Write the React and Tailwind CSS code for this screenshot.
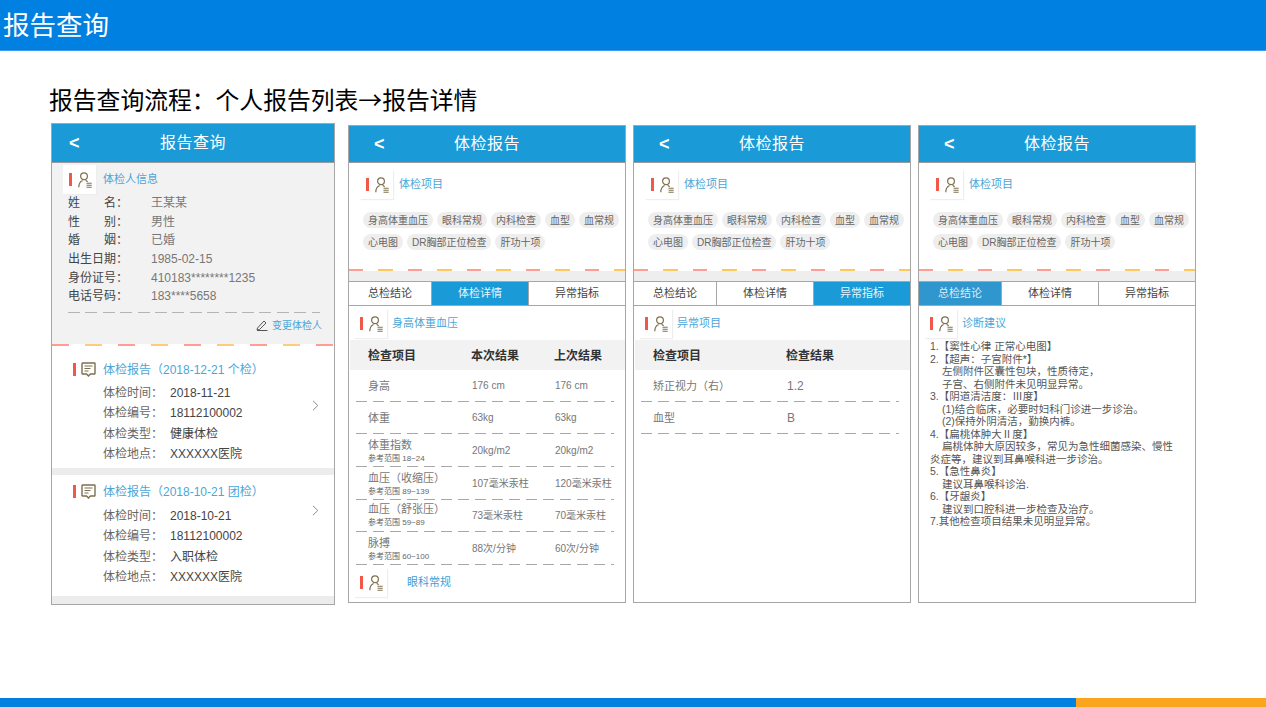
import React from 'react'

const FONT = { fontFamily: '"Liberation Sans", "Noto Sans CJK SC", sans-serif' }

const PERSON_ROWS = [
  ['姓', '名：', '王某某'],
  ['性', '别：', '男性'],
  ['婚', '姻：', '已婚'],
  ['出生日期：', '', '1985-02-15'],
  ['身份证号：', '', '410183********1235'],
  ['电话号码：', '', '183****5658'],
]

const REPORTS = [
  { title: '体检报告（2018-12-21 个检）', rows: [['体检时间：', '2018-11-21'], ['体检编号：', '18112100002'], ['体检类型：', '健康体检'], ['体检地点：', 'XXXXXX医院']] },
  { title: '体检报告（2018-10-21 团检）', rows: [['体检时间：', '2018-10-21'], ['体检编号：', '18112100002'], ['体检类型：', '入职体检'], ['体检地点：', 'XXXXXX医院']] },
]

const CHIPS = [
  ['身高体重血压', '眼科常规', '内科检查', '血型', '血常规'],
  ['心电图', 'DR胸部正位检查', '肝功十项'],
]

const DETAIL_ROWS = [
  { name: '身高', now: '176 cm', last: '176 cm', h: 'h-[31px]', pad: '' },
  { name: '体重', now: '63kg', last: '63kg', h: 'h-[31px]', pad: '' },
  { name: '体重指数', range: '参考范围 18~24', now: '20kg/m2', last: '20kg/m2', h: 'h-[32px]', pad: 'pt-[3px]' },
  { name: '血压（收缩压）', range: '参考范围 89~139', now: '107毫米汞柱', last: '120毫米汞柱', h: 'h-[32px]', pad: 'pt-[3px]' },
  { name: '血压（舒张压）', range: '参考范围 59~89', now: '73毫米汞柱', last: '70毫米汞柱', h: 'h-[31px]', pad: '' },
  { name: '脉搏', range: '参考范围 60~100', now: '88次/分钟', last: '60次/分钟', h: 'h-[32px]', pad: 'pt-[2px]' },
]

const ADVICE = [
  ['1.【窦性心律 正常心电图】', 0],
  ['2.【超声：子宫附件*】', 0],
  ['左侧附件区囊性包块，性质待定，', 1],
  ['子宫、右侧附件未见明显异常。', 1],
  ['3.【阴道清洁度：Ⅲ度】', 0],
  ['(1)结合临床，必要时妇科门诊进一步诊治。', 1],
  ['(2)保持外阴清洁，勤换内裤。', 1],
  ['4.【扁桃体肿大Ⅱ度】', 0],
  ['扁桃体肿大原因较多，常见为急性细菌感染、慢性', 1],
  ['炎症等，建议到耳鼻喉科进一步诊治。', 0],
  ['5.【急性鼻炎】', 0],
  ['建议耳鼻喉科诊治.', 1],
  ['6.【牙龈炎】', 0],
  ['建议到口腔科进一步检查及治疗。', 1],
  ['7.其他检查项目结果未见明显异常。', 0],
]

function PersonIcon() {
  return (
    <svg width="14" height="16" viewBox="0 0 14 16" fill="none" stroke="#80714f" strokeWidth="1.2">
      <circle cx="6" cy="4.200" r="3.400" />
      <path d="M.8 15.200c0-3.600 1.700-5.800 3.800-6.700M7.600 8.400c.8.300 1.500.8 2 1.400" />
      <path d="M8.500 11.200h5.200M8.500 13.200h5.200M8.500 15.200h5.200" strokeWidth="1.100" />
    </svg>
  )
}

function ReportIcon() {
  return (
    <svg width="15" height="15" viewBox="0 0 15 15" fill="none" stroke="#7d6e50" strokeWidth="1.400">
      <path d="M1.500 1h12a.5.5 0 0 1 .5.5v10a.5.5 0 0 1-.5.5H9.500l-2 2-2-2h-4a.5.5 0 0 1-.5-.5v-10a.5.5 0 0 1 .5-.5z" />
      <path d="M3.500 4h8M3.500 6.500h6M3.500 9h4" strokeWidth="1" />
    </svg>
  )
}

function IconTile({ className = '' }) {
  return (
    <div className={`flex h-[29px] w-[33px] shrink-0 items-center gap-[6px] bg-white pl-[6px] shadow-[1px_1px_1px_#eeeeee] ${className}`}>
      <span className="h-[13px] w-[3px] bg-[#f2584a]" />
      <PersonIcon />
    </div>
  )
}

function PhoneHeader({ title, tall }) {
  return (
    <div className={`flex shrink-0 items-center border-b border-[#9a9a9a] bg-[#1a9ad6] text-white ${tall ? 'h-[39px] pl-[17px]' : 'h-[37px] pl-[25px]'}`}>
      <span className="w-[13px] text-[18px] leading-none font-bold">&lt;</span>
      <span className={`flex-1 text-center text-[16px] tracking-[0.5px] ${tall ? 'pr-[30px]' : 'pr-[38px]'}`}>{title}</span>
    </div>
  )
}

function ColorDash({ wide }) {
  return (
    <div
      className={`h-[2px] shrink-0 ${
        wide
          ? 'bg-[repeating-linear-gradient(90deg,#ff9c94_0,#ff9c94_17px,transparent_17px,transparent_33px,#ffcb7c_33px,#ffcb7c_50px,transparent_50px,transparent_66px)]'
          : 'bg-[repeating-linear-gradient(90deg,#ff9c94_0,#ff9c94_14px,transparent_14px,transparent_29px,#ffc85c_29px,#ffc85c_44px,transparent_44px,transparent_59px)]'
      }`}
    />
  )
}

function ItemDash() {
  return <div className="ml-[7px] h-[1px] w-[258px] shrink-0 bg-[repeating-linear-gradient(90deg,#a8a8a8_0,#a8a8a8_11px,transparent_11px,transparent_17px)]" />
}

function Chevron() {
  return (
    <svg width="7" height="11" viewBox="0 0 7 11" fill="none" stroke="#8a8a8a" strokeWidth="1">
      <path d="M1 .8 5.800 5.500 1 10.200" />
    </svg>
  )
}

function ReportCard({ report, className, rowsClass, chevronClass }) {
  return (
    <div className={`relative flex flex-col bg-white pl-[21px] ${className}`}>
      <div className="flex h-[17px] items-center">
        <span className="h-[13px] w-[3px] bg-[#f2584a]" />
        <span className="ml-[5px]"><ReportIcon /></span>
        <span className="ml-[7px] text-[12px] text-[#4ba6d8]">{report.title}</span>
      </div>
      <div className={`flex flex-col pl-[30px] ${rowsClass}`}>
        {report.rows.map(([label, value]) => (
          <div key={label} className="flex h-[20.300px] items-center text-[12px]">
            <span className="w-[67px] text-[#666666]">{label}</span>
            <span className="text-[#444444]">{value}</span>
          </div>
        ))}
      </div>
      <div className={`absolute right-[15px] ${chevronClass}`}><Chevron /></div>
    </div>
  )
}

function ListPhone() {
  return (
    <div className="flex h-[482px] w-[284px] shrink-0 flex-col border border-[#a6a6a6]">
      <PhoneHeader title="报告查询" tall />
      <div className="flex h-[181px] shrink-0 flex-col bg-[#f2f2f2] pl-[11px]">
        <div className="mt-[3px] flex h-[27px] items-center">
          <IconTile className="h-[27px]" />
          <span className="ml-[7px] text-[11px] text-[#4ba6d8]">体检人信息</span>
        </div>
        <div className="mt-[1px] flex flex-col pl-[5px]">
          {PERSON_ROWS.map(([a, b, value]) => (
            <div key={a} className="flex h-[18.600px] items-center text-[12px]">
              <div className="flex w-[83px]">
                <span className={b ? 'w-[36px] text-[#444444]' : 'text-[#444444]'}>{a}</span>
                {b && <span className="text-[#444444]">{b}</span>}
              </div>
              <span className="text-[#777777]">{value}</span>
            </div>
          ))}
        </div>
        <div className="mt-[6px] mr-[14px] ml-[5px] h-[1px] bg-[repeating-linear-gradient(90deg,#b4b4b4_0,#b4b4b4_12px,transparent_12px,transparent_17.400px)]" />
        <div className="mt-[5px] mr-[12px] flex items-center justify-end">
          <svg width="12" height="12" viewBox="0 0 12 12" fill="none" stroke="#555555" strokeWidth="1">
            <path d="M1.500 9 8 2l2 2-6.500 6.500-2.500.5zM1 11.500h10.500" />
          </svg>
          <span className="ml-[4px] text-[10px] text-[#4ba6d8]">变更体检人</span>
        </div>
      </div>
      <ColorDash wide />
      <ReportCard report={REPORTS[0]} className="h-[122px] pt-[15px]" rowsClass="mt-[5px]" chevronClass="top-[54px]" />
      <div className="h-[7px] shrink-0 bg-[#ececec]" />
      <ReportCard report={REPORTS[1]} className="h-[121px] pt-[8px]" rowsClass="mt-[6px]" chevronClass="top-[30px]" />
      <div className="flex-1 bg-[#ececec]" />
    </div>
  )
}

function ChipBlock() {
  return (
    <div className="flex h-[106px] shrink-0 flex-col bg-white">
      <div className="mt-[7px] flex h-[29px] items-center pl-[11px]">
        <IconTile />
        <span className="ml-[6px] text-[11px] text-[#4ba6d8]">体检项目</span>
      </div>
      <div className="mt-[13px] flex flex-col gap-[6px] pl-[14px]">
        {CHIPS.map((row, i) => (
          <div key={i} className="flex gap-[4px]">
            {row.map((chip) => (
              <span key={chip} className="flex h-[16px] items-center rounded-full bg-[#eeeeee] px-[5px] text-[10px] text-[#666666]">{chip}</span>
            ))}
          </div>
        ))}
      </div>
    </div>
  )
}

function Tabs({ active }) {
  const tabs = ['总检结论', '体检详情', '异常指标']
  return (
    <div className="flex h-[25px] shrink-0 border-y border-[#a6a6a6]">
      {tabs.map((tab, i) => {
        const on = i === active
        return (
          <div
            key={tab}
            className={`flex items-center justify-center text-[11px] ${i === 0 ? 'w-[82px]' : 'w-[97px] border-l border-[#a6a6a6]'} ${
              on ? (i === 0 ? 'bg-[#2f97ce] text-[#d8eefa]' : 'bg-[#1a9ad6] text-[#e8f6fd]') : 'bg-white text-[#444444]'
            }`}
          >
            {tab}
          </div>
        )
      })}
    </div>
  )
}

function DetailPhone({ active, children }) {
  return (
    <div className="mt-[2px] flex h-[478px] w-[278px] shrink-0 flex-col border border-[#a6a6a6]">
      <PhoneHeader title="体检报告" />
      <ChipBlock />
      <ColorDash />
      <div className="h-[10px] shrink-0 bg-[#eeeeee]" />
      <Tabs active={active} />
      {children}
    </div>
  )
}

function SectionTitle({ text }) {
  return (
    <div className="flex h-[29px] shrink-0 items-center pl-[5px]">
      <IconTile />
      <span className="ml-[5px] text-[11px] text-[#4ba6d8]">{text}</span>
    </div>
  )
}

function DetailTab() {
  return (
    <div className="flex flex-1 flex-col">
      <div className="mt-[3px]"><SectionTitle text="身高体重血压" /></div>
      <div className="mt-[2px] ml-[1px] flex h-[30px] shrink-0 items-center bg-[#f2f2f2] pt-[1px] pl-[18px] text-[12px] font-bold text-[#333333]">
        <span className="w-[103px]">检查项目</span>
        <span className="w-[83px]">本次结果</span>
        <span>上次结果</span>
      </div>
      {DETAIL_ROWS.map((row) => (
        <React.Fragment key={row.name}>
          <div className={`flex shrink-0 items-center pl-[19px] ${row.h}`}>
            <div className={`flex w-[104px] flex-col text-[11px] leading-[14px] text-[#777777] ${row.pad}`}>
              <span>{row.name}</span>
              {row.range && <span className="text-[8px] leading-[13px] text-[#666666]">{row.range}</span>}
            </div>
            <span className="w-[83px] text-[10px] text-[#777777]">{row.now}</span>
            <span className="text-[10px] text-[#777777]">{row.last}</span>
          </div>
          <ItemDash />
        </React.Fragment>
      ))}
      <div className="mt-[3px] flex items-center pl-[5px]">
        <IconTile />
        <span className="ml-[20px] text-[11px] text-[#3d9dd6]">眼科常规</span>
      </div>
    </div>
  )
}

function AbnormalTab() {
  return (
    <div className="flex flex-1 flex-col">
      <div className="mt-[3px]"><SectionTitle text="异常项目" /></div>
      <div className="mt-[2px] ml-[1px] flex h-[30px] shrink-0 items-center bg-[#f2f2f2] pt-[1px] pl-[18px] text-[12px] font-bold text-[#333333]">
        <span className="w-[133px]">检查项目</span>
        <span>检查结果</span>
      </div>
      {[['矫正视力（右）', '1.2'], ['血型', 'B']].map(([name, value]) => (
        <React.Fragment key={name}>
          <div className="flex h-[31px] shrink-0 items-center pt-[1px] pl-[19px] text-[11px] text-[#777777]">
            <span className="w-[134px]">{name}</span>
            <span className="text-[12px]">{value}</span>
          </div>
          <ItemDash />
        </React.Fragment>
      ))}
    </div>
  )
}

function ConclusionTab() {
  return (
    <div className="flex flex-1 flex-col">
      <div className="mt-[3px]"><SectionTitle text="诊断建议" /></div>
      <div className="mt-[2px] pl-[11px] text-[10.500px] leading-[12.500px] text-[#555555]">
        {ADVICE.map(([line, indent]) => (
          <div key={line} className={indent ? 'pl-[12px]' : ''}>{line}</div>
        ))}
      </div>
    </div>
  )
}

export default function App() {
  return (
    <div className="flex h-[707px] w-[1266px] flex-col overflow-hidden bg-white" style={FONT}>
      <div className="flex h-[51px] shrink-0 items-center border-b border-[#3d9eea] bg-[#0080e0] pt-[3px] pl-[3px] text-[26.500px] text-white">
        报告查询
      </div>
      <div className="flex-1 pl-[49px]">
        <h1 className="mt-[30px] h-[42px] text-[23.800px] leading-[36px] text-black">
          报告查询流程：个人报告列表<span className="font-['Noto_Sans_CJK_SC']">→</span>报告详情
        </h1>
        <div className="ml-[2px] flex items-start">
          <ListPhone />
          <div className="ml-[13px] flex gap-[7px]">
            <DetailPhone active={1}><DetailTab /></DetailPhone>
            <DetailPhone active={2}><AbnormalTab /></DetailPhone>
            <DetailPhone active={0}><ConclusionTab /></DetailPhone>
          </div>
        </div>
      </div>
      <div className="flex h-[9px] shrink-0">
        <div className="w-[1076px] bg-[#0080e0]" />
        <div className="flex-1 bg-[#fba51c]" />
      </div>
    </div>
  )
}
